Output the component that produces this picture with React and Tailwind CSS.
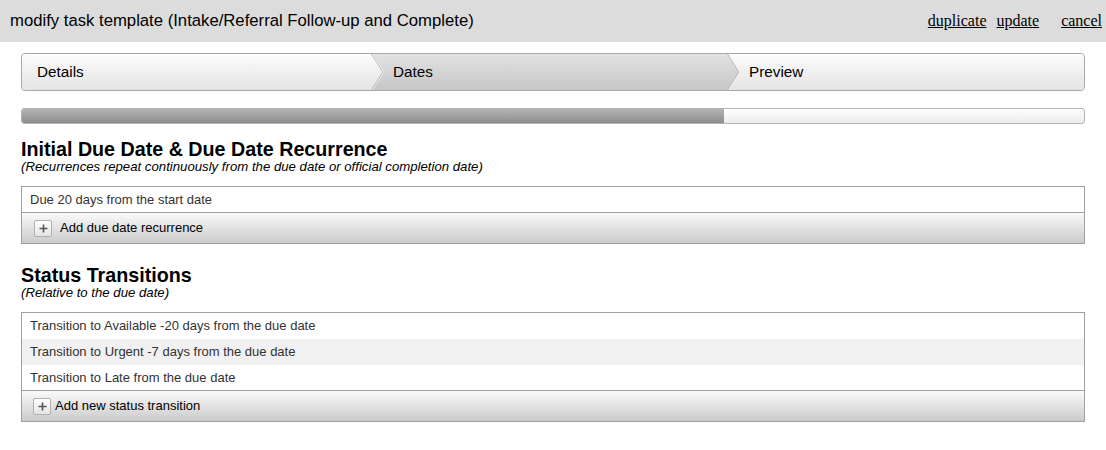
import React from "react";

function Chevron({ id, from, to }) {
  return (
    <svg
      className="absolute top-0 right-[-12px] z-10 h-full w-[13px] overflow-visible"
      viewBox="0 0 13 36"
      preserveAspectRatio="none"
    >
      <defs>
        <linearGradient id={id} x1="0" y1="0" x2="0" y2="1">
          <stop offset="0" stopColor={from} />
          <stop offset="1" stopColor={to} />
        </linearGradient>
      </defs>
      <polygon points="0,0 12,18 0,36" fill={`url(#${id})`} />
      <polyline points="0.5,0 12,18 0.5,36" fill="none" stroke="#b4b4b4" strokeWidth="1" />
      <polyline points="1.5,0 13,18 1.5,36" fill="none" stroke="#f4f4f4" strokeWidth="1" opacity="0.8" />
    </svg>
  );
}

function PlusButton() {
  return (
    <span className="flex h-[17px] w-[18px] items-center justify-center rounded-[2px] border border-[#b0b0b0] bg-gradient-to-b from-[#ffffff] to-[#e4e4e4]">
      <svg width="9" height="9" viewBox="0 0 9 9">
        <path d="M4.5 0.5V8.5M0.5 4.5H8.5" stroke="#555" strokeWidth="1.6" />
      </svg>
    </span>
  );
}

export default function App() {
  return (
    <div className="h-[450px] w-[1106px] bg-white font-['Liberation_Sans',Arial,sans-serif] text-black">
      <div className="flex h-[42px] items-center justify-between bg-[#dcdcdc] pl-[10px] pr-[4px]">
        <div className="text-[16.7px] leading-none">
          modify task template (Intake/Referral Follow-up and Complete)
        </div>
        <div className="flex font-['Liberation_Serif','Times_New_Roman',serif] text-[16px] leading-none">
          <a className="underline">duplicate</a>
          <a className="ml-[10px] underline">update</a>
          <a className="ml-[22px] underline">cancel</a>
        </div>
      </div>

      <div className="px-[21px]">
        <div className="mt-[11px] flex h-[38px] rounded-[4px] border border-[#a8a8a8] text-[15.3px]">
          <div className="relative flex flex-1 items-center rounded-l-[4px] bg-gradient-to-b from-[#fcfcfc] to-[#e4e4e4] pl-[15px]">
            Details
            <Chevron id="g1" from="#fcfcfc" to="#e4e4e4" />
          </div>
          <div className="relative flex flex-1 items-center bg-gradient-to-b from-[#e2e2e2] to-[#c6c6c6] pl-[21px]">
            Dates
            <Chevron id="g2" from="#e2e2e2" to="#c6c6c6" />
          </div>
          <div className="relative flex flex-1 items-center rounded-r-[4px] bg-gradient-to-b from-[#fcfcfc] to-[#e4e4e4] pl-[21px]">
            Preview
          </div>
        </div>

        <div className="mt-[17px] flex h-[16px] overflow-hidden rounded-[3px] border border-[#b4b4b4] bg-gradient-to-b from-[#ffffff] to-[#ececec]">
          <div className="h-full w-[66.1%] bg-gradient-to-b from-[#b4b4b4] to-[#8c8c8c]" />
        </div>

        <h2 className="mt-[15px] text-[19.7px] font-bold leading-[21px]">
          Initial Due Date &amp; Due Date Recurrence
        </h2>
        <div className="text-[13.2px] italic leading-[14px]">
          (Recurrences repeat continuously from the due date or official completion date)
        </div>

        <div className="mt-[12px] border border-[#a0a0a0]">
          <div className="flex h-[26px] items-center border-b border-[#a0a0a0] pl-[8px] text-[13px] text-[#333]">
            Due 20 days from the start date
          </div>
          <div className="flex h-[30px] items-center bg-gradient-to-b from-[#fafafa] to-[#cbcbcb] pl-[12px] text-[13px]">
            <PlusButton />
            <span className="ml-[8px]">Add due date recurrence</span>
          </div>
        </div>

        <h2 className="mt-[21px] text-[19.7px] font-bold leading-[21px]">Status Transitions</h2>
        <div className="text-[13.2px] italic leading-[14px]">(Relative to the due date)</div>

        <div className="mt-[12px] border border-[#a0a0a0]">
          <div className="flex h-[26px] items-center pl-[8px] text-[13px] text-[#333]">
            Transition to Available -20 days from the due date
          </div>
          <div className="flex h-[26px] items-center bg-[#f1f1f1] pl-[8px] text-[13px] text-[#333]">
            Transition to Urgent -7 days from the due date
          </div>
          <div className="flex h-[26px] items-center border-b border-[#a0a0a0] pl-[8px] text-[13px] text-[#333]">
            Transition to Late from the due date
          </div>
          <div className="flex h-[30px] items-center bg-gradient-to-b from-[#fafafa] to-[#cbcbcb] pl-[11px] text-[13px]">
            <PlusButton />
            <span className="ml-[4px]">Add new status transition</span>
          </div>
        </div>
      </div>
    </div>
  );
}
